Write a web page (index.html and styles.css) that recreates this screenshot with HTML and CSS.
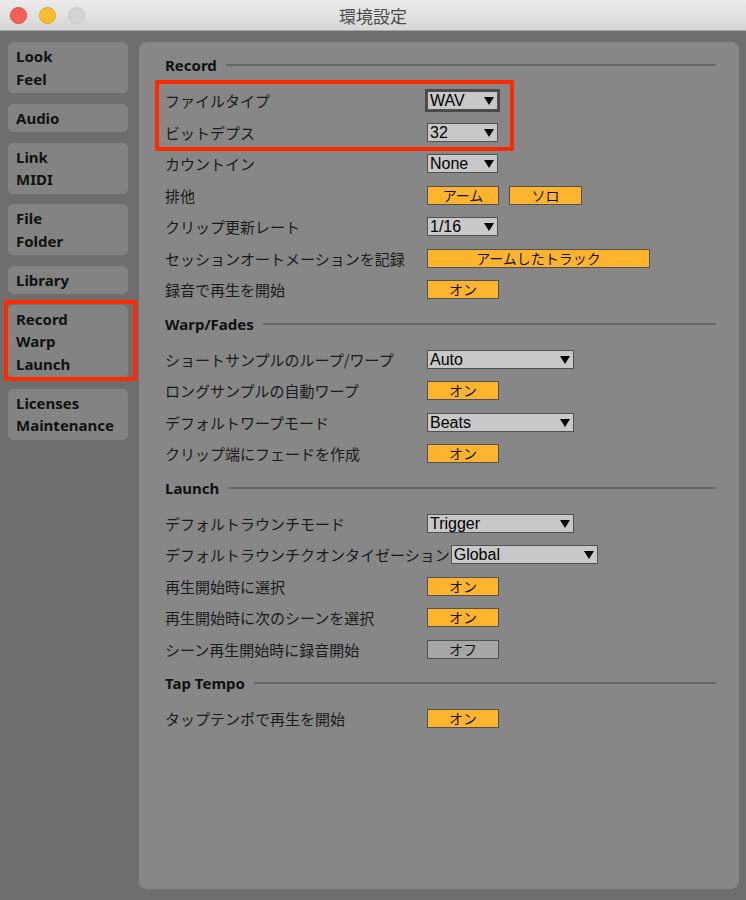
FILE: index.html
```html
<!DOCTYPE html>
<html lang="ja">
<head>
    <meta charset="UTF-8">
    <title>環境設定</title>
    <link rel="stylesheet" href="styles.css">
</head>
<body>
    <div class="window">
        <div class="titlebar">
            <div class="lights">
                <span class="light close"></span>
                <span class="light minimize"></span>
                <span class="light zoom"></span>
            </div>
            <div class="title">環境設定</div>
            <div></div>
        </div>

        <div class="content">
            <div class="sidebar">
                <div class="tab">Look<br>Feel</div>
                <div class="tab">Audio</div>
                <div class="tab">Link<br>MIDI</div>
                <div class="tab">File<br>Folder</div>
                <div class="tab">Library</div>
                <div class="tab marked">Record<br>Warp<br>Launch</div>
                <div class="tab">Licenses<br>Maintenance</div>
            </div>

            <div class="panel">
                <!-- Record -->
                <div class="section-title">Record</div>
                <div class="marked-group">
                    <div class="row">
                        <span class="label">ファイルタイプ</span>
                        <div class="dropdown small focused">WAV</div>
                    </div>
                    <div class="row">
                        <span class="label">ビットデプス</span>
                        <div class="dropdown small">32</div>
                    </div>
                </div>
                <div class="row">
                    <span class="label">カウントイン</span>
                    <div class="dropdown small">None</div>
                </div>
                <div class="row">
                    <span class="label">排他</span>
                    <div class="toggle on">アーム</div>
                    <div class="toggle on solo">ソロ</div>
                </div>
                <div class="row">
                    <span class="label">クリップ更新レート</span>
                    <div class="dropdown small">1/16</div>
                </div>
                <div class="row">
                    <span class="label">セッションオートメーションを記録</span>
                    <div class="toggle on long">アームしたトラック</div>
                </div>
                <div class="row">
                    <span class="label">録音で再生を開始</span>
                    <div class="toggle on">オン</div>
                </div>

                <!-- Warp/Fades -->
                <div class="section-title">Warp/Fades</div>
                <div class="row">
                    <span class="label">ショートサンプルのループ/ワープ</span>
                    <div class="dropdown wide">Auto</div>
                </div>
                <div class="row">
                    <span class="label">ロングサンプルの自動ワープ</span>
                    <div class="toggle on">オン</div>
                </div>
                <div class="row">
                    <span class="label">デフォルトワープモード</span>
                    <div class="dropdown wide">Beats</div>
                </div>
                <div class="row">
                    <span class="label">クリップ端にフェードを作成</span>
                    <div class="toggle on">オン</div>
                </div>

                <!-- Launch -->
                <div class="section-title">Launch</div>
                <div class="row">
                    <span class="label">デフォルトラウンチモード</span>
                    <div class="dropdown wide">Trigger</div>
                </div>
                <div class="row">
                    <span class="label">デフォルトラウンチクオンタイゼーション</span>
                    <div class="dropdown wide">Global</div>
                </div>
                <div class="row">
                    <span class="label">再生開始時に選択</span>
                    <div class="toggle on">オン</div>
                </div>
                <div class="row">
                    <span class="label">再生開始時に次のシーンを選択</span>
                    <div class="toggle on">オン</div>
                </div>
                <div class="row">
                    <span class="label">シーン再生開始時に録音開始</span>
                    <div class="toggle">オフ</div>
                </div>

                <!-- Tap Tempo -->
                <div class="section-title">Tap Tempo</div>
                <div class="row">
                    <span class="label">タップテンポで再生を開始</span>
                    <div class="toggle on">オン</div>
                </div>
            </div>
        </div>
    </div>
</body>
</html>
```

FILE: styles.css
```css
body {
    margin: 0;
    padding: 0;
    background-color: #6e6e6e;
    font-family: "Noto Sans", "Noto Sans CJK JP", sans-serif;
    color: #141414;
}
.window {
    width: 746px;
    height: 900px;
    display: flex;
    flex-direction: column;
    background-color: #6e6e6e;
}

/* title bar */
.titlebar {
    height: 30px;
    flex-shrink: 0;
    display: grid;
    grid-template-columns: 1fr auto 1fr;
    align-items: center;
    background: linear-gradient(#ececec, #d6d6d6);
    border-bottom: 1px solid #a9a9a9;
}
.lights {
    display: flex;
    gap: 12px;
    padding-left: 10px;
}
.light {
    width: 17px;
    height: 17px;
    border-radius: 50%;
    box-sizing: border-box;
}
.light.close {
    background-color: #fd5f57;
    border: 1px solid #e2463f;
}
.light.minimize {
    background-color: #febc2e;
    border: 1px solid #e0a228;
}
.light.zoom {
    background-color: #d4d4d4;
    border: 1px solid #c3c3c3;
}
.title {
    font-family: "Noto Sans CJK JP", sans-serif;
    font-size: 17px;
    color: #4a4a4a;
    padding-top: 1px;
}

/* body */
.content {
    flex: 1;
    display: flex;
    gap: 11px;
    padding: 11px 7px 11px 8px;
    min-height: 0;
}
.sidebar {
    width: 120px;
    flex-shrink: 0;
    display: flex;
    flex-direction: column;
    gap: 10.5px;
}
.tab {
    position: relative;
    background-color: #838383;
    border-radius: 5px;
    padding: 3px 0 3px 8px;
    font-weight: bold;
    font-size: 15px;
    line-height: 22.5px;
    color: #111;
}
.tab.marked::after {
    content: "";
    position: absolute;
    top: -5px;
    bottom: -3px;
    left: -4px;
    right: -9px;
    border: 4px solid #ff2a00;
    border-radius: 2px;
}

.panel {
    flex: 1;
    background-color: #878787;
    border-radius: 8px;
    padding: 13px 23px 0 26px;
}
.section-title {
    display: flex;
    align-items: center;
    height: 20px;
    margin-top: 8px;
    margin-bottom: 10px;
    font-weight: bold;
    font-size: 15px;
    color: #111;
}
.section-title:first-child {
    margin-top: 0;
}
.section-title::after {
    content: "";
    flex: 1;
    height: 2px;
    margin-left: 9px;
    background-color: #666;
}

.marked-group {
    position: relative;
}
.marked-group::after {
    content: "";
    position: absolute;
    top: -5px;
    bottom: -3px;
    left: -10px;
    width: 359px;
    box-sizing: border-box;
    border: 4px solid #ff2a00;
    border-radius: 2px;
}

.row {
    display: flex;
    align-items: center;
    height: 31.5px;
}
.label {
    min-width: 261px;
    margin-right: 1px;
    font-family: "Noto Sans CJK JP", sans-serif;
    font-size: 15px;
    white-space: nowrap;
    color: #1a1a1a;
}

.dropdown {
    position: relative;
    box-sizing: border-box;
    height: 19px;
    padding-left: 2px;
    background-color: #c8c8c8;
    border: 1px solid #505050;
    font-family: "Liberation Sans", Arial, sans-serif;
    font-size: 16px;
    line-height: 17px;
    color: #000;
}
.dropdown::after {
    content: "";
    position: absolute;
    right: 3px;
    top: 5px;
    border-left: 5px solid transparent;
    border-right: 5px solid transparent;
    border-top: 8px solid #000;
}
.dropdown.small {
    width: 71px;
}
.dropdown.wide {
    width: 147px;
}
.dropdown.focused {
    box-shadow: 0 0 0 2px #4a4a4a;
}

.toggle {
    box-sizing: border-box;
    width: 72px;
    height: 19px;
    background-color: #a6a6a6;
    border: 1px solid #505050;
    font-family: "Noto Sans CJK JP", sans-serif;
    font-size: 14px;
    line-height: 17px;
    text-align: center;
    color: #111;
}
.toggle.on {
    background-color: #ffb42e;
}
.toggle.solo {
    width: 73px;
    margin-left: 10px;
}
.toggle.long {
    width: 223px;
}
```
